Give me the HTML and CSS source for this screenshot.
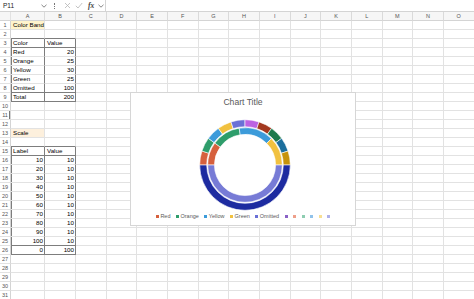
FILE: index.html
```html
<!DOCTYPE html>
<html lang="en">
<head>
  <meta charset="UTF-8">
  <title>Color Band Gauge</title>
  <link rel="stylesheet" href="styles.css">
</head>
<body>

  <div class="formula-bar">
    <div class="name-box">
      <span>P11</span>
      <svg class="chev" width="6" height="4" viewBox="0 0 6 4"><polyline points="0.5,0.8 3,3.2 5.5,0.8" /></svg>
    </div>
    <span class="grip"></span>
    <div class="fx-tools">
      <svg class="tool" width="7" height="7" viewBox="0 0 7 7"><path d="M1 1 L6 6 M6 1 L1 6" /></svg>
      <svg class="tool" width="8" height="7" viewBox="0 0 8 7"><polyline points="0.8,3.8 3,6 7.2,1" /></svg>
      <span class="fx">fx</span>
      <svg class="chev" width="6" height="4" viewBox="0 0 6 4"><polyline points="0.5,0.8 3,3.2 5.5,0.8" /></svg>
    </div>
    <div class="formula-input"></div>
  </div>

  <div class="sheet-wrap">
    <div class="sheet" id="sheet"></div>

    <div class="chart">
      <div class="chart-title">Chart Title</div>
      <svg class="donut" id="donut" width="92" height="92" viewBox="0 0 92 92"></svg>
      <ul class="legend">
        <li><i class="c1"></i>Red</li>
        <li><i class="c2"></i>Orange</li>
        <li><i class="c3"></i>Yellow</li>
        <li><i class="c4"></i>Green</li>
        <li><i class="c5"></i>Omitted</li>
        <li><i class="c6"></i></li>
        <li><i class="c7"></i></li>
        <li><i class="c8"></i></li>
        <li><i class="c9"></i></li>
        <li><i class="c10"></i></li>
        <li><i class="c11"></i></li>
      </ul>
    </div>
  </div>

  <script>
    const columns = ["A", "B", "C", "D", "E", "F", "G", "H", "I", "J", "K", "L", "M", "N", "O"];
    const rowCount = 31;

    const data = {
      1: ["Color Band"],
      3: ["Color", "Value"],
      4: ["Red", 20],
      5: ["Orange", 25],
      6: ["Yellow", 30],
      7: ["Green", 25],
      8: ["Omitted", 100],
      9: ["Total", 200],
      13: ["Scale"],
      15: ["Label", "Value"],
      16: [10, 10],
      17: [20, 10],
      18: [30, 10],
      19: [40, 10],
      20: [50, 10],
      21: [60, 10],
      22: [70, 10],
      23: [80, 10],
      24: [90, 10],
      25: [100, 10],
      26: [0, 100]
    };

    const fills = { "A1": "fill-yellow", "A13": "fill-peach" };

    // bordered ranges in columns A:B
    const tables = [
      { from: 3, to: 9 },
      { from: 15, to: 26 }
    ];

    function tableFor(row) {
      return tables.find(t => row >= t.from && row <= t.to);
    }

    const sheet = document.getElementById("sheet");

    function addCell(text, classes) {
      const el = document.createElement("div");
      el.className = classes.join(" ");
      if (text !== undefined) el.textContent = text;
      sheet.appendChild(el);
    }

    addCell("", ["corner"]);
    columns.forEach(c => addCell(c, ["col-head"]));

    for (let r = 1; r <= rowCount; r++) {
      addCell(r, r === 11 ? ["row-head", "active"] : ["row-head"]);
      const values = data[r] || [];
      columns.forEach((c, i) => {
        const classes = ["cell"];
        const value = values[i];
        if (typeof value === "number") classes.push("num");
        if (fills[c + r]) classes.push(fills[c + r]);

        if (i < 2) {
          const t = tableFor(r);
          if (t) {
            classes.push("edge-right");
            if (i === 0) classes.push("edge-left");
            if (r === t.from || r === t.to - 1 || r === t.to) classes.push("edge-bottom");
          }
          if (tables.some(t => t.from - 1 === r)) classes.push("edge-bottom");
        }
        addCell(value, classes);
      });
    }

    // doughnut: inner ring = colour band, outer ring = scale
    const cx = 46, cy = 46;
    const rings = [
      {
        r0: 30.6, r1: 37.3,
        values: [20, 25, 30, 25, 100],
        colors: ["#d6603d", "#2e9d6b", "#3c9bda", "#f1c13f", "#777bd6"]
      },
      {
        r0: 38.3, r1: 45.3,
        values: [10, 10, 10, 10, 10, 10, 10, 10, 10, 10, 100],
        colors: ["#d6603d", "#2e9d6b", "#3c9bda", "#f1c13f", "#6a70d6", "#bc62e2",
                 "#a3391f", "#1d7a4c", "#1b6e9d", "#c6930b", "#1d2ba0"]
      }
    ];

    function point(r, deg) {
      const a = deg * Math.PI / 180;
      return (cx + r * Math.sin(a)).toFixed(2) + " " + (cy - r * Math.cos(a)).toFixed(2);
    }

    function slicePath(r0, r1, a0, a1) {
      const large = a1 - a0 > 180 ? 1 : 0;
      return "M" + point(r1, a0) +
        " A" + r1 + " " + r1 + " 0 " + large + " 1 " + point(r1, a1) +
        " L" + point(r0, a1) +
        " A" + r0 + " " + r0 + " 0 " + large + " 0 " + point(r0, a0) + " Z";
    }

    const donut = document.getElementById("donut");
    rings.forEach(ring => {
      const total = ring.values.reduce((a, b) => a + b, 0);
      let angle = 270;
      ring.values.forEach((v, i) => {
        const sweep = v / total * 360;
        const path = document.createElementNS("http://www.w3.org/2000/svg", "path");
        path.setAttribute("d", slicePath(ring.r0, ring.r1, angle, angle + sweep));
        path.setAttribute("fill", ring.colors[i]);
        donut.appendChild(path);
        angle += sweep;
      });
    });
  </script>
</body>
</html>
```

FILE: styles.css
```css
body {
  margin: 0;
  font-family: "Liberation Sans", Arial, sans-serif;
  background: #fff;
  color: #000;
  overflow: hidden;
}

/* formula bar */

.formula-bar {
  display: flex;
  align-items: center;
  height: 12px;
  border-bottom: 1px solid #d4d4d4;
  box-sizing: border-box;
  font-size: 6.5px;
  color: #222;
}

.name-box {
  display: flex;
  align-items: center;
  justify-content: space-between;
  width: 47px;
  padding-left: 3px;
  box-sizing: border-box;
}

.chev polyline {
  fill: none;
  stroke: #666;
  stroke-width: 0.8;
}

.grip {
  width: 1px;
  height: 6px;
  margin: 0 8px 0 7px;
  border-left: 1px dotted #777;
}

.fx-tools {
  display: flex;
  align-items: center;
  gap: 3.5px;
  width: 41px;
}

.tool path,
.tool polyline {
  fill: none;
  stroke: #b5b5b5;
  stroke-width: 0.8;
}

.fx {
  font-family: "Liberation Serif", serif;
  font-style: italic;
  font-weight: bold;
  font-size: 7.5px;
  color: #444;
  margin-left: 2px;
}

.formula-input {
  flex: 1;
  height: 12px;
  border-left: 1px solid #d4d4d4;
}

/* grid */

.sheet-wrap {
  position: relative;
}

.sheet {
  display: grid;
  grid-template-columns: 11px 34px 31px repeat(13, 30.67px);
  grid-auto-rows: 9px;
  font-size: 6.2px;
}

.sheet > div {
  box-sizing: border-box;
  border-right: 1px solid #e2e2e2;
  border-bottom: 1px solid #e2e2e2;
  line-height: 9px;
  white-space: nowrap;
  overflow: visible;
}

.corner,
.col-head {
  background: #f6f6f6;
  border-bottom-color: #d4d4d4 !important;
}

.col-head {
  text-align: center;
  color: #555;
  font-size: 5.5px;
  border-right-color: #dadada !important;
}

.row-head {
  text-align: center;
  color: #555;
  font-size: 5.5px;
  border-right-color: #d4d4d4 !important;
}

.row-head.active {
  box-shadow: inset -1px 0 0 #777;
}

.cell {
  padding: 0 1px 0 2px;
  line-height: 8.5px !important;
}

.num {
  text-align: right;
}

.fill-yellow {
  background: #fff3cc;
}

.fill-peach {
  background: #fdf0dd;
}

.sheet > .edge-right {
  border-right-color: #7d7d7d;
}

.sheet > .edge-bottom {
  border-bottom-color: #7d7d7d;
}

.edge-left {
  box-shadow: inset 1px 0 0 #7d7d7d;
}

/* chart floats over the grid */

.chart {
  position: absolute;
  left: 130px;
  top: 80px;
  width: 226px;
  height: 134px;
  box-sizing: border-box;
  border: 1px solid #d6d6d6;
  background: #fff;
  display: flex;
  flex-direction: column;
  align-items: center;
  padding-top: 3px;
}

.chart-title {
  font-size: 8.6px;
  line-height: 12px;
  color: #595959;
}

.donut {
  margin-top: 11px;
  margin-left: 3px;
}

.donut path {
  stroke: #fff;
  stroke-width: 0.6;
}

.legend {
  list-style: none;
  margin: 1px 0 0;
  padding: 0;
  display: flex;
  gap: 5.5px;
  font-size: 5.5px;
  line-height: 8px;
  color: #595959;
}

.legend li {
  display: flex;
  align-items: center;
  gap: 1.5px;
}

.legend i {
  width: 3px;
  height: 3px;
}

.c1 { background: #d6603d; }
.c2 { background: #2e9d6b; }
.c3 { background: #3c9bda; }
.c4 { background: #f1c13f; }
.c5 { background: #6a70d6; }
.c6 { background: #8a62c6; }
.c7 { background: #ee9f8a; }
.c8 { background: #8ecdb1; }
.c9 { background: #91c2ea; }
.c10 { background: #f8df93; }
.c11 { background: #aeb0ea; }
```
